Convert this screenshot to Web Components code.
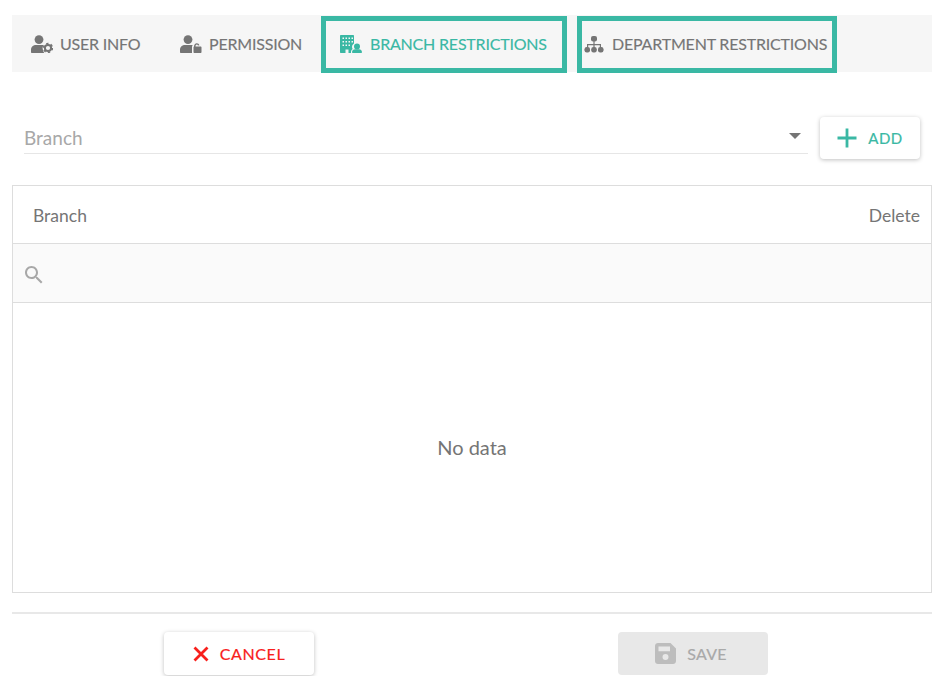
<!DOCTYPE html>
<html>
<head>
<meta charset="utf-8">
<title>Branch restrictions</title>
<style>
  html, body { margin: 0; background: #fff; }
  body { font-family: "Lato", "Liberation Sans", sans-serif; color: #757575; }
</style>
</head>
<body>
<user-form>
  <tab-bar slot="tabs">
    <tab-item pad="19" gap="7" width="149" label="USER INFO">
      <svg viewBox="0 0 22 18" width="22" height="18" fill="#757575"><circle cx="8" cy="4.600" r="4.400"/><path d="M0 17v-2.200C0 12 2.300 10 5 10h6c.6 0 1 .1 1.500.3-.8 1.200-1 2.500-.8 3.700.2 1.400.6 2.800 1.500 4H1c-.6 0-1-.4-1-1z"/><circle cx="17" cy="13" r="3.100" fill="none" stroke="#757575" stroke-width="2"/><circle cx="17" cy="13" r="4.400" fill="none" stroke="#757575" stroke-width="1.600" stroke-dasharray="2.300 2.300"/></svg>
    </tab-item>
    <tab-item pad="19" gap="7" width="160" label="PERMISSION">
      <svg viewBox="0 0 22 18" width="22" height="18" fill="#757575"><circle cx="8" cy="4.600" r="4.400"/><path d="M0 17v-2.200C0 12 2.300 10 5 10h6.500c.5 0 .8.100 1.200.2-.4.500-.7 1-.7 1.800v6H1c-.6 0-1-.4-1-1z"/><path d="M14 11.500c0-2 1.200-3.300 2.800-3.300 1.300 0 2.300.8 2.600 2l-1.400.4c-.2-.6-.6-1-1.200-1-.8 0-1.300.8-1.300 1.900h5c.6 0 1 .4 1 1V17c0 .6-.4 1-1 1h-6c-.6 0-1-.4-1-1v-4.500c0-.6.400-1 1-1z"/></svg>
    </tab-item>
    <tab-item boxed active pad="14" gap="8" width="246" label="BRANCH RESTRICTIONS">
      <svg viewBox="0 0 22 18" width="22" height="18" fill="#3ab8a4"><path fill-rule="evenodd" d="M1 0h12c.6 0 1 .4 1 1v7.600c-1.300.8-2 2-2 3.400 0 .8.200 1.500.7 2-1 .6-1.700 1.700-1.700 3v1H8.500v-3.500h-3V18H1c-.6 0-1-.4-1-1V1c0-.6.400-1 1-1zm1.500 2.500V4h1.500V2.500zm3 0V4H7V2.500zm3 0V4H10V2.500zm3 0V4H13V2.500zM2.500 6v1.500h1.500V6zm3 0v1.500H7V6zm3 0v1.500H10V6zm3 0v1.500H13V6zm-9 3.500V11h1.500V9.500zm3 0V11H7V9.500zm3 0V11H10V9.500z"/><circle cx="17" cy="11.500" r="3"/><path d="M12 17.200c0-1.900 1.500-3 3-3h4c1.500 0 3 1.100 3 3 0 .5-.3.800-.8.800h-8.400c-.5 0-.8-.3-.8-.8z"/></svg>
    </tab-item>
    <tab-item boxed pad="2" gap="8" width="260" label="DEPARTMENT RESTRICTIONS">
      <svg viewBox="0 0 20 18" width="20" height="18" fill="#757575"><rect x="7" y="1" width="6" height="5.500" rx="2"/><path d="M9.400 6h1.200v3h6.400v3.500h-1.200V10.200h-5.200v2.300H9.400v-2.300H4.200v2.300H3V9h6.400z"/><rect x="0.500" y="12" width="5.500" height="5.500" rx="2.200"/><rect x="7.250" y="12" width="5.500" height="5.500" rx="2.200"/><rect x="14" y="12" width="5.500" height="5.500" rx="2.200"/></svg>
    </tab-item>
  </tab-bar>

  <branch-select slot="picker" placeholder="Branch"></branch-select>
  <action-button slot="picker" kind="add" label="ADD" width="100" height="42">
    <svg viewBox="0 0 20 20" width="20" height="20"><path d="M10 0.500v19M0.500 10h19" stroke="#3ab8a4" stroke-width="2.800" fill="none"/></svg>
  </action-button>

  <data-table slot="table" first="Branch" last="Delete" empty="No data"></data-table>

  <action-button slot="footer" kind="cancel" label="CANCEL" width="150" height="43">
    <svg viewBox="0 0 16 16" width="16" height="16"><path d="M1.500 1.500l13 13M14.500 1.500l-13 13" stroke="#f8201c" stroke-width="2.800" fill="none"/></svg>
  </action-button>
  <action-button slot="footer" kind="save" label="SAVE" width="150" height="43" disabled>
    <svg viewBox="0 0 21 21" width="21" height="21" fill="#bdbdbd"><path fill-rule="evenodd" d="M3 0h12.500L21 5.500V18c0 1.700-1.300 3-3 3H3c-1.700 0-3-1.300-3-3V3c0-1.700 1.300-3 3-3zm.5 3.500v4.700h11.500V3.500zM10.500 11a3 3 0 1 0 0 6 3 3 0 0 0 0-6z"/></svg>
  </action-button>
</user-form>

<script>
  // page frame: tabs, picker row, table and footer
  class UserForm extends HTMLElement {
    constructor() {
      super();
      this.attachShadow({ mode: 'open' });
      this.shadowRoot.innerHTML = `
        <style>
          :host { display: block; padding: 15px 17px 0 12px; height: 661px; overflow: hidden; }
          .picker { display: flex; align-items: flex-start; gap: 12px; margin: 45px 12px 26px 12px; }
          .footer { display: flex; gap: 304px; margin-top: 19px; padding: 18px 0 0 152px; border-top: 2px solid #e8e8e8; }
        </style>
        <slot name="tabs"></slot>
        <div class="picker"><slot name="picker"></slot></div>
        <slot name="table"></slot>
        <div class="footer"><slot name="footer"></slot></div>
      `;
    }
  }

  class TabBar extends HTMLElement {
    constructor() {
      super();
      this.attachShadow({ mode: 'open' });
      this.shadowRoot.innerHTML = `
        <style>
          :host { display: flex; height: 57px; background: #f6f6f6; }
        </style>
        <slot></slot>
      `;
    }
  }

  class TabItem extends HTMLElement {
    constructor() {
      super();
      this.attachShadow({ mode: 'open' });
    }

    connectedCallback() {
      const pad = this.getAttribute('pad');
      const gap = this.getAttribute('gap');
      this.shadowRoot.innerHTML = `
        <style>
          :host {
            display: flex; align-items: center; box-sizing: border-box; flex: none;
            height: 57px; width: ${this.getAttribute('width')}px; padding-left: ${pad}px; gap: ${gap}px;
            font-size: 16px; letter-spacing: -.2px; color: #757575; white-space: nowrap;
            -webkit-text-stroke: .15px currentColor;
          }
          :host([active]) { color: #3ab8a4; }
          :host([boxed]) { border: 5px solid #3ab8a4; margin: 1px 10px -1px 0; padding-bottom: 2px; }
          ::slotted(svg) { flex: none; }
        </style>
        <slot></slot><span>${this.getAttribute('label')}</span>
      `;
    }
  }

  class BranchSelect extends HTMLElement {
    constructor() {
      super();
      this.attachShadow({ mode: 'open' });
    }

    connectedCallback() {
      this.shadowRoot.innerHTML = `
        <style>
          :host {
            display: flex; flex: 1; align-items: center; justify-content: space-between; box-sizing: border-box;
            height: 37px; padding: 5px 7px 0 0; border-bottom: 1px solid #e6e6e6;
            font-size: 19px; color: #a8a8a8;
          }
          i { width: 0; height: 0; border: 6px solid transparent; border-top-color: #757575; border-bottom: 0; margin-bottom: 4px; }
        </style>
        <span>${this.getAttribute('placeholder')}</span><i></i>
      `;
    }
  }

  class ActionButton extends HTMLElement {
    constructor() {
      super();
      this.attachShadow({ mode: 'open' });
    }

    connectedCallback() {
      const colors = { add: '#3ab8a4', cancel: '#f8201c', save: '#a9a9a9' };
      const spacing = { add: '.5px', cancel: '.6px', save: '.3px' };
      const sizes = { add: '15px', cancel: '16px', save: '16px' };
      const shift = { add: 0, cancel: 0, save: 4 };
      const kind = this.getAttribute('kind');
      this.shadowRoot.innerHTML = `
        <style>
          :host {
            display: flex; align-items: center; justify-content: center; gap: 11px; flex: none; box-sizing: border-box;
            width: ${this.getAttribute('width')}px; height: ${this.getAttribute('height')}px; padding-right: ${shift[kind]}px;
            border-radius: 4px; background: #fff; box-shadow: 0 1px 4px rgba(0,0,0,.25);
            font-size: ${sizes[kind]}; letter-spacing: ${spacing[kind]}; color: ${colors[kind]};
            -webkit-text-stroke: .2px currentColor;
          }
          :host([disabled]) { background: #e8e8e8; box-shadow: none; }
          ::slotted(svg) { flex: none; }
        </style>
        <slot></slot><span>${this.getAttribute('label')}</span>
      `;
    }
  }

  class DataTable extends HTMLElement {
    constructor() {
      super();
      this.attachShadow({ mode: 'open' });
    }

    connectedCallback() {
      this.shadowRoot.innerHTML = `
        <style>
          :host { display: block; box-sizing: border-box; height: 408px; border: 1px solid #ddd; font-size: 17.500px; }
          .head { display: flex; align-items: center; justify-content: space-between; box-sizing: border-box; height: 58px; padding: 2px 11px 0 20px; border-bottom: 1px solid #ddd; }
          .search { display: flex; align-items: center; box-sizing: border-box; height: 59px; padding: 3px 0 0 9px; background: #fafafa; border-bottom: 1px solid #ddd; }
          .empty { display: flex; align-items: center; justify-content: center; box-sizing: border-box; height: 289px; padding-bottom: 2px; font-size: 20px; }
        </style>
        <div class="head"><span>${this.getAttribute('first')}</span><span>${this.getAttribute('last')}</span></div>
        <div class="search">
          <svg viewBox="0 0 24 24" width="24" height="24" fill="#a8a8a8"><path d="M15.500 14h-.79l-.28-.27C15.410 12.590 16 11.110 16 9.500 16 5.910 13.090 3 9.500 3S3 5.910 3 9.500 5.910 16 9.500 16c1.610 0 3.090-.59 4.230-1.570l.27.28v.79l5 4.990L20.490 19l-4.990-5zm-6 0C7.010 14 5 11.990 5 9.500S7.010 5 9.500 5 14 7.010 14 9.500 11.990 14 9.500 14z"/></svg>
        </div>
        <div class="empty">${this.getAttribute('empty')}</div>
      `;
    }
  }

  customElements.define('user-form', UserForm);
  customElements.define('tab-bar', TabBar);
  customElements.define('tab-item', TabItem);
  customElements.define('branch-select', BranchSelect);
  customElements.define('action-button', ActionButton);
  customElements.define('data-table', DataTable);
</script>
</body>
</html>
